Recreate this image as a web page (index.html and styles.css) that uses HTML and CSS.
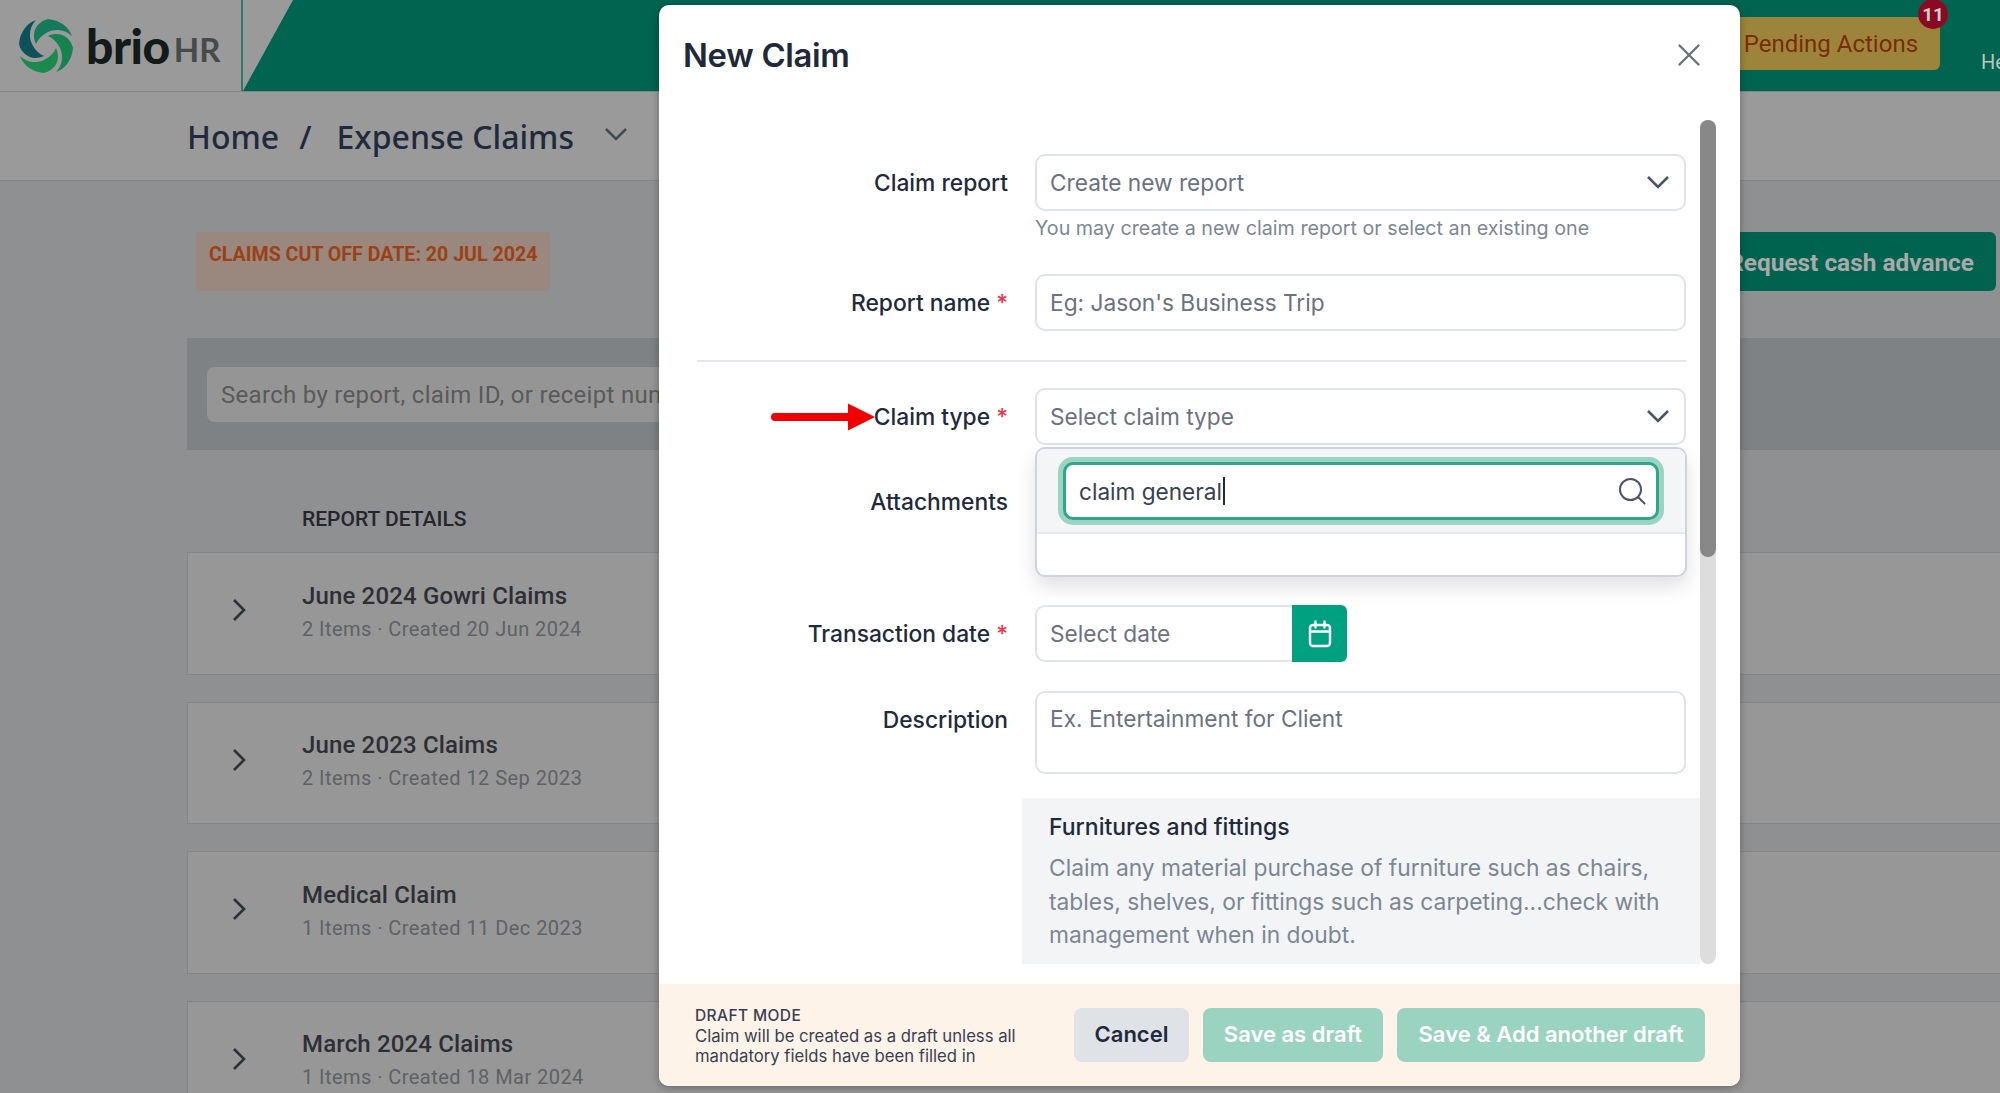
FILE: index.html
```html
<!DOCTYPE html>
<html lang="en">
<head>
<meta charset="utf-8">
<title>New Claim - BrioHR</title>
<link rel="stylesheet" href="styles.css">
</head>
<body>
<div class="page">
  <header class="topbar">
    <div class="brand">
      <svg class="brand-mark" viewBox="0 0 54 54" aria-hidden="true">
        <g>
          <path fill="#157a5c" d="M29 0C41 1 50 8 53 17C47 11 37 9 29 13C23 16 19 20 17 25C12 14 17 3 29 0Z"/>
          <path fill="#16824f" d="M29 0C41 1 50 8 53 17C47 11 37 9 29 13C23 16 19 20 17 25C12 14 17 3 29 0Z" transform="rotate(90 27 27)"/>
          <path fill="#1a8a4f" d="M29 0C41 1 50 8 53 17C47 11 37 9 29 13C23 16 19 20 17 25C12 14 17 3 29 0Z" transform="rotate(180 27 27)"/>
          <path fill="#0c5258" d="M29 0C41 1 50 8 53 17C47 11 37 9 29 13C23 16 19 20 17 25C12 14 17 3 29 0Z" transform="rotate(270 27 27)"/>
        </g>
      </svg>
      <span class="brand-name">brio</span><span class="brand-hr">HR</span>
    </div>
    <svg class="slant" viewBox="0 0 50 91" preserveAspectRatio="none" aria-hidden="true"><polygon points="0,0 50,0 0,91" fill="#9a9a9a"/></svg>
    <div class="top-actions">
      <div class="pending">Pending Actions<span class="badge">11</span></div>
      <span class="help">Help</span>
    </div>
  </header>

  <nav class="crumbs">
    <span>Home</span><span class="crumb-sep">/</span><span>Expense Claims</span>
    <svg class="crumb-chev" viewBox="0 0 24 14" aria-hidden="true"><path d="M2 2l10 10L22 2"/></svg>
  </nav>

  <main class="content">
    <div class="toolbar">
      <div class="cutoff">CLAIMS CUT OFF DATE: 20 JUL 2024</div>
      <div class="cash-btn">Request cash advance</div>
    </div>
    <div class="filter-band">
      <div class="search-box">Search by report, claim ID, or receipt number</div>
    </div>
    <div class="col-head">REPORT DETAILS</div>
    <div class="report-list">
      <article class="report">
        <svg class="row-chev" viewBox="0 0 14 24" aria-hidden="true"><path d="M2 2l10 10L2 22"/></svg>
        <div class="report-text"><h3 class="report-title">June 2024 Gowri Claims</h3><p class="report-sub">2 Items · Created 20 Jun 2024</p></div>
      </article>
      <article class="report">
        <svg class="row-chev" viewBox="0 0 14 24" aria-hidden="true"><path d="M2 2l10 10L2 22"/></svg>
        <div class="report-text"><h3 class="report-title">June 2023 Claims</h3><p class="report-sub">2 Items · Created 12 Sep 2023</p></div>
      </article>
      <article class="report">
        <svg class="row-chev" viewBox="0 0 14 24" aria-hidden="true"><path d="M2 2l10 10L2 22"/></svg>
        <div class="report-text"><h3 class="report-title">Medical Claim</h3><p class="report-sub">1 Items · Created 11 Dec 2023</p></div>
      </article>
      <article class="report">
        <svg class="row-chev" viewBox="0 0 14 24" aria-hidden="true"><path d="M2 2l10 10L2 22"/></svg>
        <div class="report-text"><h3 class="report-title">March 2024 Claims</h3><p class="report-sub">1 Items · Created 18 Mar 2024</p></div>
      </article>
    </div>
  </main>
</div>

<section class="modal">
  <div class="modal-head">
    <h2 class="modal-title">New Claim</h2>
    <svg class="close-icon" viewBox="0 0 22 22" aria-hidden="true"><path d="M1.500 1.500l19 19M20.500 1.500l-19 19"/></svg>
  </div>
  <div class="modal-body">
    <div class="form-scroll">
      <div class="form-row row-report">
        <div class="label">Claim report</div>
        <div class="field-wrap">
          <div class="field">Create new report
            <svg class="chev" viewBox="0 0 24 14" aria-hidden="true"><path d="M2 2l10 10L22 2"/></svg>
          </div>
          <div class="hint">You may create a new claim report or select an existing one</div>
        </div>
      </div>
      <div class="form-row row-name">
        <div class="label">Report name <span class="req">*</span></div>
        <div class="field-wrap"><div class="field">Eg: Jason's Business Trip</div></div>
      </div>
      <hr class="divider">
      <div class="form-row">
        <div class="label label-arrow">
          <svg class="red-arrow" viewBox="0 0 104 28" aria-hidden="true"><path d="M4 10H77V0.500L104 14L77 27.500V18H4a4 4 0 0 1 0-8Z"/></svg>
          Claim type <span class="req">*</span>
        </div>
        <div class="field-wrap">
          <div class="field">Select claim type
            <svg class="chev" viewBox="0 0 24 14" aria-hidden="true"><path d="M2 2l10 10L22 2"/></svg>
          </div>
          <div class="dropdown">
            <div class="dd-search">
              <div class="dd-input">
                <span>claim general</span><span class="caret"></span>
                <svg class="search-icon" viewBox="0 0 28 28" aria-hidden="true"><circle cx="12.500" cy="12.500" r="10.500"/><path d="M20 20l6.500 6.500"/></svg>
              </div>
            </div>
          </div>
        </div>
      </div>
      <div class="form-row row-attach">
        <div class="label">Attachments</div>
      </div>
      <div class="form-row row-date">
        <div class="label">Transaction date <span class="req">*</span></div>
        <div class="date-group">
          <div class="field date-field">Select date</div>
          <div class="date-btn">
            <svg viewBox="0 0 24 28" aria-hidden="true"><rect x="2" y="5" width="20" height="21" rx="3"/><path d="M2 11.500h20M7.500 1.500v6M16.500 1.500v6"/></svg>
          </div>
        </div>
      </div>
      <div class="form-row row-desc">
        <div class="label">Description</div>
        <div class="field-wrap"><div class="field textarea">Ex. Entertainment for Client</div></div>
      </div>
      <aside class="info-box">
        <h4 class="info-title">Furnitures and fittings</h4>
        <p class="info-text">Claim any material purchase of furniture such as chairs, tables, shelves, or fittings such as carpeting...check with management when in doubt.</p>
      </aside>
    </div>
    <div class="scrollbar"><div class="thumb"></div></div>
  </div>
  <footer class="modal-foot">
    <div class="draft-note">
      <div class="draft-title">DRAFT MODE</div>
      <div>Claim will be created as a draft unless all<br>mandatory fields have been filled in</div>
    </div>
    <div class="foot-btns">
      <div class="btn btn-cancel">Cancel</div>
      <div class="btn btn-save">Save as draft</div>
      <div class="btn btn-save btn-wide">Save &amp; Add another draft</div>
    </div>
  </footer>
</section>
</body>
</html>
```

FILE: styles.css
```css
* { box-sizing: border-box; }
html, body { margin: 0; padding: 0; }
body {
  width: 2000px;
  height: 1093px;
  overflow: hidden;
  position: relative;
  background: #8f9092;
  font-family: Inter, Roboto, "Liberation Sans", sans-serif;
}
h2, h3, h4, p { margin: 0; font-weight: inherit; }

/* header */
.topbar { display: flex; height: 92px; background: #006450; border-bottom: 1px solid #858585; }
.brand { width: 243px; height: 91px; background: #9a9a9a; border-right: 2px solid #2f7a68; display: flex; align-items: center; padding-left: 19px; flex: none; }
.brand-mark { width: 54px; height: 54px; flex: none; }
.brand-name { font-family: Lato, sans-serif; font-weight: 900; font-size: 48px; color: #131a1a; margin-left: 13px; line-height: 1; letter-spacing: -.5px; }
.brand-hr { font-family: Lato, sans-serif; font-weight: 700; font-size: 33px; color: #454a4a; margin-left: 4px; margin-top: 8px; line-height: 1; }
.slant { width: 50px; height: 91px; flex: none; display: block; }
.top-actions { margin-left: auto; display: flex; align-items: flex-start; padding-top: 17px; margin-right: -22px; }
.pending { position: relative; height: 53px; width: 200px; background: #9c853b; border-radius: 0 6px 6px 0; color: #7a2c06; font-family: Roboto, sans-serif; font-size: 24px; display: flex; align-items: center; justify-content: flex-end; padding-right: 22px; }
.badge { position: absolute; right: -8px; top: -18px; width: 30px; height: 30px; border-radius: 50%; background: #8b0a21; color: #cfcfcf; font-weight: 700; font-size: 19px; display: flex; align-items: center; justify-content: center; font-family: Roboto, sans-serif; }
.help { margin-left: 41px; margin-top: 33px; color: #b6c8c2; font-family: Roboto, sans-serif; font-size: 20px; line-height: 24px; }

/* breadcrumbs */
.crumbs { height: 89px; background: #9a9a9a; border-bottom: 1px solid #858585; padding-left: 187px; display: flex; align-items: center; font-family: "Noto Sans", sans-serif; font-size: 32px; font-weight: 500; color: #1f2a3c; }
.crumb-sep { margin: 0 25px 0 20px; }
.crumb-chev { width: 24px; height: 14px; margin-left: 30px; margin-top: -4px; fill: none; stroke: #444a50; stroke-width: 2.500; }

/* page content */
.content { padding: 51px 0 0 187px; }
.toolbar { display: flex; justify-content: space-between; height: 59px; padding-right: 4px; }
.cutoff { width: 354px; margin-left: 9px; background: #9a877e; border-radius: 4px; color: #9a4216; font-family: Roboto, sans-serif; font-weight: 700; font-size: 19.600px; padding: 11px 13px; line-height: 24px; white-space: nowrap; }
.cash-btn { background: #00634f; border-radius: 6px; color: #a9a9a9; font-family: Roboto, sans-serif; font-weight: 700; font-size: 24.400px; display: flex; align-items: center; padding: 1px 22px 0; }
.filter-band { margin-top: 47px; height: 112px; background: #7f8284; padding: 29px 20px; }
.search-box { width: 900px; height: 55px; background: #959595; border-radius: 8px; color: #5a5a5a; font-family: Roboto, sans-serif; font-size: 24px; letter-spacing: .3px; display: flex; align-items: center; padding-left: 14px; }
.col-head { margin-top: 58px; padding-left: 115px; height: 22px; line-height: 22px; font-family: Roboto, sans-serif; font-weight: 500; font-size: 21px; color: #24262b; }
.report-list { margin-top: 22px; display: flex; flex-direction: column; gap: 27px; }
.report { height: 122.500px; background: #979797; border: 1px solid #858585; border-right: 0; display: flex; align-items: center; padding-left: 44px; flex: none; }
.row-chev { width: 14px; height: 24px; flex: none; margin-right: 56px; margin-top: -6px; fill: none; stroke: #2e3136; stroke-width: 2.600; }
.report-text { padding-bottom: 4px; }
.report-title { font-size: 24px; font-weight: 500; color: #2d2f35; line-height: 30px; font-family: Roboto, sans-serif; letter-spacing: .15px; }
.report-sub { font-size: 20px; color: #5f6265; line-height: 26px; margin-top: 5px; font-family: Roboto, sans-serif; letter-spacing: .45px; }

/* modal */
.modal { position: absolute; left: 659px; top: 5px; width: 1081px; height: 1081px; background: #fff; border-radius: 10px; box-shadow: 0 2px 8px rgba(0,0,0,.3); display: flex; flex-direction: column; overflow: hidden; color: #1f2a3c; }
.modal-head { height: 115px; flex: none; display: flex; justify-content: space-between; padding: 28px 40px 0 24px; }
.modal-title { font-size: 32.800px; font-weight: 600; line-height: 44px; color: #1f2937; font-family: Inter, sans-serif; letter-spacing: -.3px; }
.close-icon { width: 22px; height: 22px; margin-top: 11px; fill: none; stroke: #6b7280; stroke-width: 2.400; stroke-linecap: round; }
.modal-body { height: 864px; flex: none; position: relative; display: flex; }
.form-scroll { width: 1041px; flex: none; padding-top: 34px; }
.scrollbar { width: 16px; height: 844px; background: #ddd; border-radius: 8px; }
.thumb { height: 437px; background: #888; border-radius: 8px; }

.form-row { display: flex; align-items: flex-start; }
.label { width: 349px; flex: none; text-align: right; padding-top: 15px; font-size: 22.800px; font-weight: 500; line-height: 28px; color: #1f2a3c; }
.req { color: #e8384f; }
.field-wrap { margin-left: 27px; width: 651px; position: relative; }
.field { height: 57px; border: 2px solid #e0e3e9; border-radius: 10px; display: flex; align-items: center; justify-content: space-between; padding: 0 13px 1px; font-size: 22.700px; color: #6b7280; background: #fff; }
.chev { width: 24px; height: 14px; fill: none; stroke: #4b5563; stroke-width: 2.600; margin-right: 1px; }
.hint { font-size: 19.700px; line-height: 24px; color: #7b8794; margin-top: 5px; }
.row-report { height: 120px; }
.row-name { height: 86px; }
.divider { margin: 0 14px 26px 38px; border: 0; border-top: 2px solid #e5e7eb; }
.label-arrow { position: relative; }
.red-arrow { position: absolute; left: 112px; top: 15px; width: 104px; height: 28px; fill: #f00000; }

.dropdown { position: absolute; left: 0; top: 59px; width: 652px; height: 130px; border: 2px solid #cfd4dc; border-radius: 10px; background: #fff; box-shadow: 0 10px 20px rgba(0,0,0,.12); z-index: 2; overflow: hidden; }
.dd-search { height: 85px; padding: 13px 26px; background: #f4f5f7; border-bottom: 2px solid #e7e9ed; }
.dd-input { height: 58px; border: 3px solid #2fa58a; border-radius: 10px; box-shadow: 0 0 0 5px #9cd4c4; background: #fff; display: flex; align-items: center; padding-left: 13px; font-size: 22.600px; color: #374151; position: relative; }
.caret { display: inline-block; width: 2px; height: 28px; background: #1f2a3c; margin-left: 1px; }
.search-icon { position: absolute; right: 10px; top: 12px; width: 28px; height: 28px; fill: none; stroke: #4b5563; stroke-width: 2; stroke-linecap: round; }

.row-attach { height: 160px; padding-top: 32px; }
.row-attach .label { padding-top: 11px; }
.row-date { height: 86px; }
.date-group { margin-left: 27px; display: flex; }
.date-field { width: 257px; border-radius: 10px 0 0 10px; border-right: 0; }
.date-btn { width: 55px; height: 57px; background: #00a181; border-radius: 0 6px 6px 0; display: flex; align-items: center; justify-content: center; }
.date-btn svg { width: 24px; height: 28px; fill: none; stroke: #fff; stroke-width: 2.400; stroke-linecap: round; }
.row-desc { height: 107px; }
.textarea { height: 83px; align-items: flex-start; padding-top: 12px; line-height: 28px; }
.info-box { margin-left: 363px; width: 678px; height: 166px; background: #f3f4f6; padding: 15px 27px; }
.info-title { font-size: 23px; font-weight: 500; line-height: 28px; color: #1f2a3c; }
.info-text { font-size: 22.800px; line-height: 33.500px; color: #7b8794; margin-top: 10px; }

.modal-foot { flex: 1; background: #fef3e9; display: flex; justify-content: space-between; padding: 22px 35px 0 36px; }
.draft-note { font-size: 16.700px; line-height: 20px; color: #374151; }
.draft-title { font-size: 15.500px; font-weight: 500; letter-spacing: .4px; }
.foot-btns { display: flex; gap: 14px; padding-top: 2px; }
.btn { height: 54px; border-radius: 8px; display: flex; align-items: center; justify-content: center; font-size: 22px; font-weight: 600; padding-bottom: 2px; }
.btn-cancel { width: 115px; background: #dfe2e6; color: #1f2a3c; }
.btn-save { width: 180px; background: #9bd3c1; color: #fff; }
.btn-wide { width: 308px; }
```
